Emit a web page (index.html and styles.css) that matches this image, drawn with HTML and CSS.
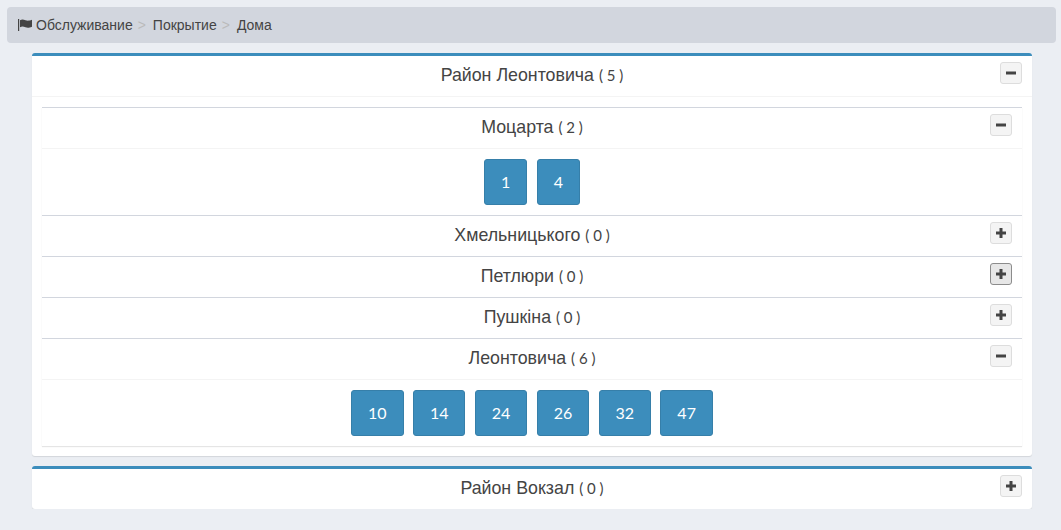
FILE: index.html
```html
<!DOCTYPE html>
<html lang="uk">
<head>
<meta charset="utf-8">
<title>Дома</title>
<link rel="stylesheet" href="styles.css">
</head>
<body>
<svg class="defs" width="0" height="0" aria-hidden="true">
  <symbol id="i-plus" viewBox="0 0 12 12"><path d="M4.5 1h3v3.5H11v3H7.5V11h-3V7.5H1v-3h3.5z"/></symbol>
  <symbol id="i-minus" viewBox="0 0 12 12"><path d="M1 4.5h10v3H1z"/></symbol>
</svg>
<nav class="crumbs">
  <svg class="flag" viewBox="0 0 14 12" aria-hidden="true"><path d="M0 0h1.2v12H0zM2 1.2C4 0 5.500.4 7.500 1.200c2 .7 3.500.6 6.500-.4v7c-3 1.100-4.500 1.200-6.500.5C5.500 7.500 4 7.200 2 8.300z"/></svg>
  <span class="crumb">Обслуживание</span><span class="sep">&gt;</span>
  <span class="crumb">Покрытие</span><span class="sep">&gt;</span>
  <span class="crumb">Дома</span>
</nav>
<main class="boxes">
  <section class="box">
    <header class="box-head">
      <h2 class="title">Район Леонтовича <span class="count">( 5 )</span></h2>
      <button class="tool"><svg class="ico"><use href="#i-minus"/></svg></button>
    </header>
    <div class="box-body">
      <section class="sub">
        <header class="box-head">
          <h3 class="title">Моцарта <span class="count">( 2 )</span></h3>
          <button class="tool"><svg class="ico"><use href="#i-minus"/></svg></button>
        </header>
        <div class="houses"><a class="house">1</a><a class="house">4</a></div>
      </section>
      <section class="sub">
        <header class="box-head">
          <h3 class="title">Хмельницького <span class="count">( 0 )</span></h3>
          <button class="tool"><svg class="ico"><use href="#i-plus"/></svg></button>
        </header>
      </section>
      <section class="sub">
        <header class="box-head">
          <h3 class="title">Петлюри <span class="count">( 0 )</span></h3>
          <button class="tool is-hover"><svg class="ico"><use href="#i-plus"/></svg></button>
        </header>
      </section>
      <section class="sub">
        <header class="box-head">
          <h3 class="title">Пушкіна <span class="count">( 0 )</span></h3>
          <button class="tool"><svg class="ico"><use href="#i-plus"/></svg></button>
        </header>
      </section>
      <section class="sub">
        <header class="box-head">
          <h3 class="title">Леонтовича <span class="count">( 6 )</span></h3>
          <button class="tool"><svg class="ico"><use href="#i-minus"/></svg></button>
        </header>
        <div class="houses"><a class="house">10</a><a class="house">14</a><a class="house">24</a><a class="house">26</a><a class="house">32</a><a class="house">47</a></div>
      </section>
    </div>
  </section>
  <section class="box">
    <header class="box-head">
      <h2 class="title">Район Вокзал <span class="count">( 0 )</span></h2>
      <button class="tool"><svg class="ico"><use href="#i-plus"/></svg></button>
    </header>
  </section>
</main>
</body>
</html>
```

FILE: styles.css
```css
* { box-sizing: border-box; }
html, body { margin: 0; padding: 0; }
body {
  background: #ebeef3;
  color: #444;
  font-family: "Liberation Sans", Arial, sans-serif;
  font-size: 14px;
  padding: 7px 5px 0 7px;
}
.defs { display: block; height: 0; }
.crumbs {
  display: flex;
  align-items: center;
  height: 36px;
  padding: 0 11px;
  background: #d2d6de;
  border-radius: 4px;
  color: #444;
}
.flag { width: 14px; height: 12px; fill: #444; margin-right: 4px; }
.sep { color: #bbb; margin: 0 7px 0 5px; }
.boxes { display: flex; flex-direction: column; gap: 10px; margin: 10px 24px 0 25px; }
.box {
  background: #fff;
  border-top: 3px solid #3c8dbc;
  border-radius: 3px;
  box-shadow: 0 1px 1px rgba(0, 0, 0, .1);
}
.box-head {
  display: grid;
  grid-template-columns: 1fr auto 1fr;
  align-items: start;
  height: 40px;
  padding: 6px 10px 0;
}
.title {
  grid-column: 2;
  margin: 0;
  padding-top: 3px;
  font-size: 17.800px;
  line-height: 20px;
  font-weight: 400;
  color: #444;
  white-space: nowrap;
}
.count { font-family: Lato, sans-serif; font-size: 15px; }
.tool {
  grid-column: 3;
  justify-self: end;
  display: flex;
  align-items: center;
  justify-content: center;
  width: 22px;
  height: 22px;
  padding: 0;
  background: #f4f4f4;
  border: 1px solid #ddd;
  border-radius: 3px;
}
.tool.is-hover { background: #e7e7e7; border-color: #8c8c8c; }
.ico { width: 12px; height: 12px; fill: #444; }
.box-body {
  padding: 10px;
  border-top: 1px solid #f4f4f4;
}
.sub {
  background: #fff;
  border-top: 1px solid #d2d6de;
  box-shadow: 0 1px 1px rgba(0, 0, 0, .1);
}
.houses {
  display: flex;
  justify-content: center;
  gap: 9.300px;
  padding: 10px;
  border-top: 1px solid #f4f4f4;
}
.house {
  display: block;
  height: 46px;
  padding: 0 16px;
  line-height: 44px;
  font-family: Lato, sans-serif;
  font-size: 16px;
  color: #fff;
  background: #3c8dbc;
  border: 1px solid #367fa9;
  border-radius: 3px;
}
```
